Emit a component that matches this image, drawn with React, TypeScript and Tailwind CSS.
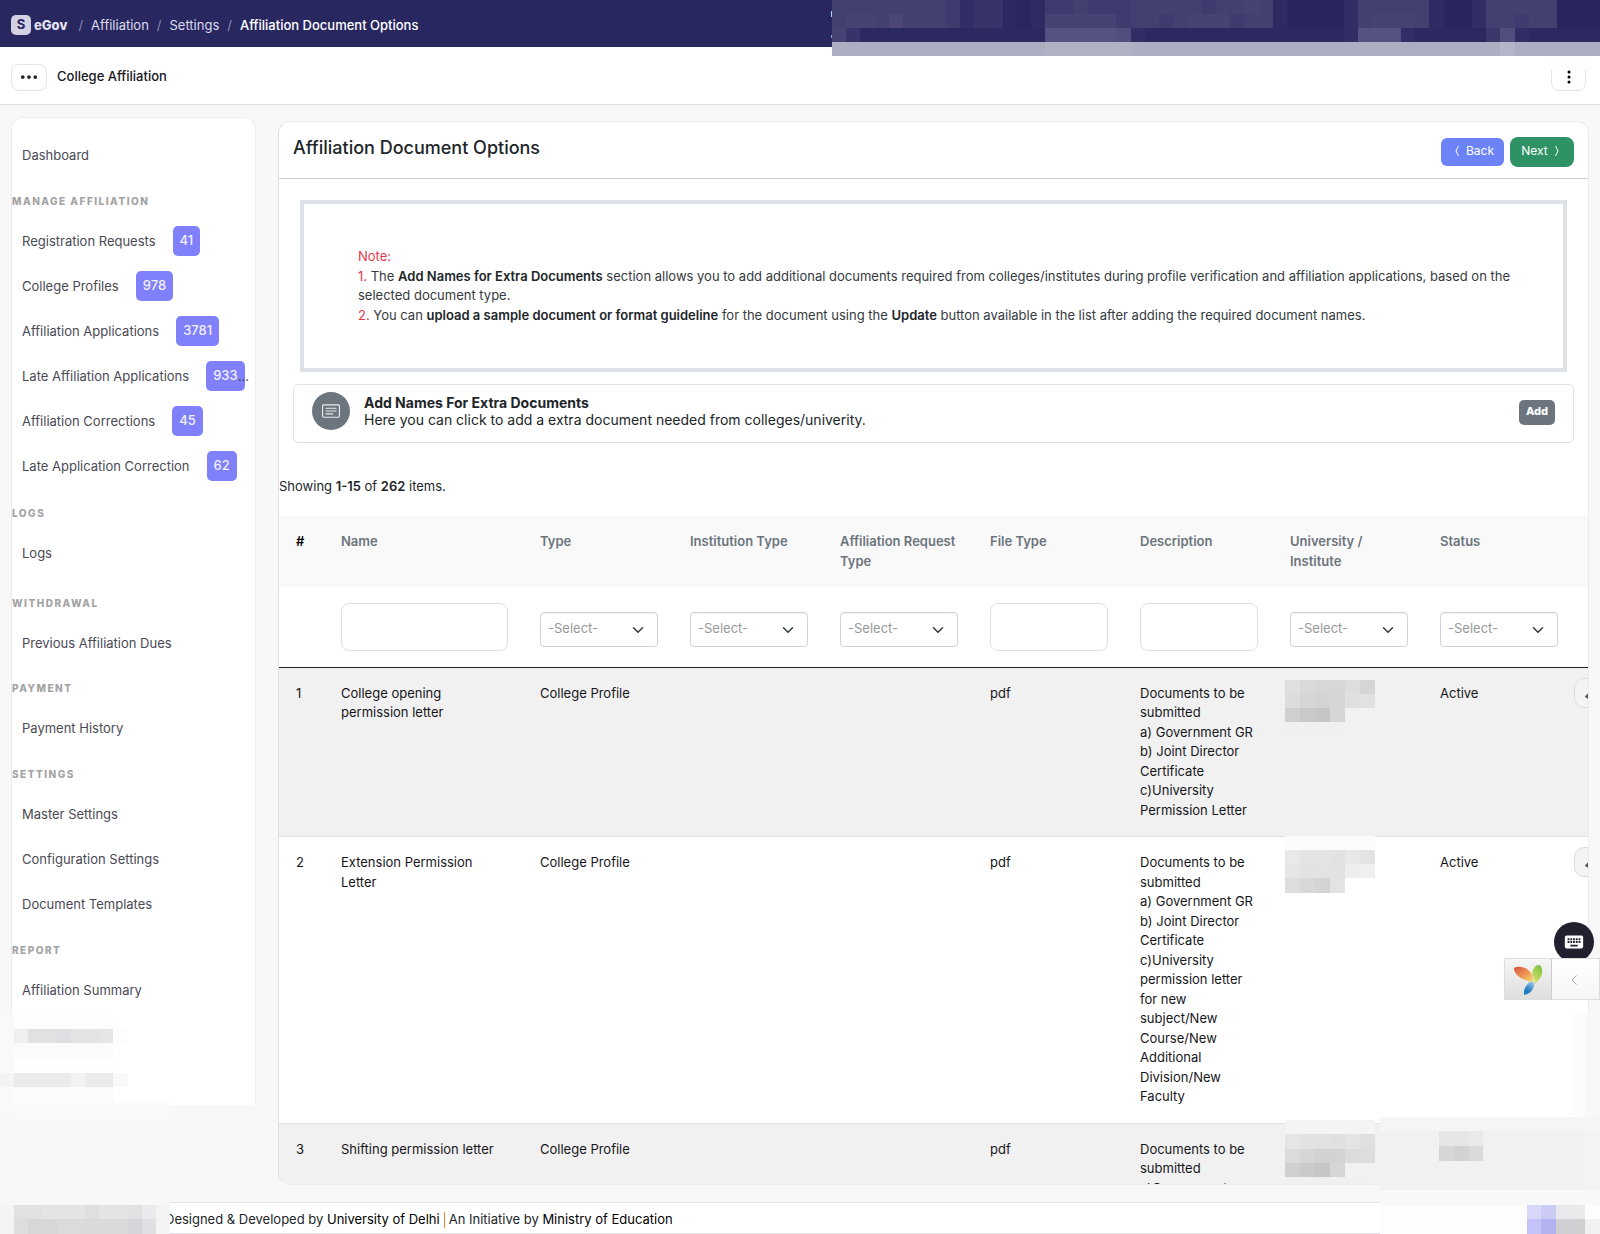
import React from "react";
import { BsCardText, BsThreeDots, BsThreeDotsVertical } from "react-icons/bs";
import { MdKeyboard } from "react-icons/md";

type NavItem = { label: string; count?: string; cut?: boolean };
type NavGroup = { title?: string; space?: string; items: NavItem[] };

const navGroups: NavGroup[] = [
  { items: [{ label: "Dashboard" }] },
  {
    title: "Manage Affiliation",
    space: "pb-0.5 pt-px",
    items: [
      { label: "Registration Requests", count: "41" },
      { label: "College Profiles", count: "978" },
      { label: "Affiliation Applications", count: "3781" },
      { label: "Late Affiliation Applications", count: "933", cut: true },
      { label: "Affiliation Corrections", count: "45" },
      { label: "Late Application Correction", count: "62" },
    ],
  },
  { title: "Logs", space: "pb-[5px]", items: [{ label: "Logs" }] },
  { title: "Withdrawal", items: [{ label: "Previous Affiliation Dues" }] },
  { title: "Payment", space: "pb-px", items: [{ label: "Payment History" }] },
  {
    title: "Settings",
    space: "pb-px",
    items: [
      { label: "Master Settings" },
      { label: "Configuration Settings" },
      { label: "Document Templates" },
    ],
  },
  { title: "Report", items: [{ label: "Affiliation Summary" }] },
];

const columns: { label: string; filter: "text" | "select" }[] = [
  { label: "Name", filter: "text" },
  { label: "Type", filter: "select" },
  { label: "Institution Type", filter: "select" },
  { label: "Affiliation Request Type", filter: "select" },
  { label: "File Type", filter: "text" },
  { label: "Description", filter: "text" },
  { label: "University / Institute", filter: "select" },
  { label: "Status", filter: "select" },
];

const rows = [
  {
    name: "College opening permission letter",
    type: "College Profile",
    fileType: "pdf",
    description: [
      "Documents to be submitted",
      "a) Government GR",
      "b) Joint Director Certificate",
      "c)University Permission Letter",
    ],
    status: "Active",
  },
  {
    name: "Extension Permission Letter",
    type: "College Profile",
    fileType: "pdf",
    description: [
      "Documents to be submitted",
      "a) Government GR",
      "b) Joint Director Certificate",
      "c)University permission letter for new subject/New Course/New Additional Division/New Faculty",
    ],
    status: "Active",
  },
  {
    name: "Shifting permission letter",
    type: "College Profile",
    fileType: "pdf",
    description: ["Documents to be submitted", "a)Government"],
    status: "",
  },
];

// [x, y, width, height, fill]
type Cell = [number, number, number, number, string];

function Mosaic({ width, height, cells, className }: { width: number; height: number; cells: Cell[]; className: string }) {
  return (
    <svg
      width={width}
      height={height}
      viewBox={`0 0 ${width} ${height}`}
      shapeRendering="crispEdges"
      aria-hidden="true"
      className={`pointer-events-none absolute ${className}`}
    >
      {cells.map(([x, y, w, h, fill], i) => (
        <rect key={i} x={x} y={y} width={w} height={h} fill={fill} />
      ))}
    </svg>
  );
}

// one letter per block
function grid(lines: string[], colors: Record<string, string>, w: number, h: number): Cell[] {
  const out: Cell[] = [];
  lines.forEach((line, r) => {
    line.split("").forEach((c, i) => {
      out.push([i * w, r * h, w, h, colors[c]]);
    });
  });
  return out;
}

const headerCells = grid(
  [
    "mmmmmmmmldkkcbellmlllmmmmmlmmnmebbbbfmmmmmebbfmmmmmbbb",
    "mnnmpmmmldkkcbennnnnlmmlmnnnlmmebbbbfmnnnmebbfmmlmmbbb",
    "nkcccccccccccccqqqqqodccccccccccccccdqqqdcccccgodccccc",
    "sssssssssssssssttttttssssssssssssssssssssssssssussssss",
  ],
  {
    b: "#28265c",
    c: "#2b2960",
    d: "#302e64",
    e: "#2d2b61",
    f: "#302e64",
    g: "#3a386b",
    k: "#363468",
    l: "#3e3c6e",
    m: "#424071",
    n: "#454373",
    o: "#504e7c",
    p: "#4b4675",
    q: "#545280",
    s: "#aeaec2",
    t: "#b1b1c4",
    u: "#b5b5c9",
  },
  768 / 54,
  14,
);

const grays = (list: string[], y: number, w = 15, h = 14): Cell[] =>
  list.map((c, i) => [i * w, y, w, h, `#${c}${c}${c}`] as Cell);

const universityCells: Cell[][] = [
  [
    ...grays(["df", "d9", "d7", "d7", "dd", "d5"], 0),
    ...grays(["dc", "d6", "d4", "d5", "e0", "e1"], 14),
    ...grays(["cf", "c9", "c6", "d6"], 28),
    [0, 42, 60, 14, "#f0f0f0"],
    [0, 142, 90, 14, "#f0f2f1"],
    [0, 156, 90, 14, "#fcfcfc"],
  ],
  [
    ...grays(["e9", "e4", "e4", "e2", "e8", "e3"], 0),
    ...grays(["e6", "e2", "e3", "e2", "ee", "f0"], 14),
    ...grays(["dd", "d8", "d4", "e3"], 28, 15, 15),
  ],
  [
    [0, 0, 90, 14, "#f4f4f4"],
    ...grays(["e5", "e2", "e2", "e0", "e4", "df"], 14, 15, 15),
    ...grays(["db", "d6", "d2", "d3", "dc", "dd"], 29),
    ...grays(["cf", "ca", "c6", "d6"], 43),
    [0, 57, 90, 10, "#f0f0f0"],
  ],
];
const universityPlace = ["top-3", "top-[13px]", "-top-1"];

const sidebarCells: Cell[] = [
  [0, 0, 14, 104, "#f9f9f9"],
  [14, 0, 99, 15, "#fdfdfd"],
  [14, 15, 14, 14, "#efeff0"],
  [28, 15, 29, 14, "#e0e1e3"],
  [57, 15, 14, 14, "#dedfe2"],
  [71, 15, 28, 14, "#e2e3e5"],
  [99, 15, 14, 14, "#e6e6e6"],
  [113, 15, 15, 14, "#fdfdfd"],
  [14, 29, 99, 15, "#fbfbfb"],
  [14, 44, 99, 15, "#fefefe"],
  [0, 59, 14, 14, "#f4f4f4"],
  [14, 59, 57, 14, "#ebebeb"],
  [71, 59, 14, 14, "#f2f2f2"],
  [85, 59, 28, 14, "#ebebeb"],
  [113, 59, 15, 14, "#f9f9f9"],
  [14, 73, 99, 16, "#fbfbfb"],
  [14, 89, 156, 15, "#fafafa"],
];

const footerLeftCells: Cell[] = [
  [0, 0, 170, 3, "#f8f8f8"],
  [0, 3, 170, 29, "#f4f4f4"],
  [14, 3, 28, 14, "#e0e2e1"],
  [42, 3, 43, 14, "#e3e4e5"],
  [85, 3, 14, 14, "#dfdfe0"],
  [99, 3, 29, 14, "#e4e4e5"],
  [128, 3, 14, 14, "#e0e1e3"],
  [142, 3, 14, 14, "#e9eaed"],
  [14, 17, 14, 15, "#dcdddd"],
  [28, 17, 29, 15, "#d6d8d7"],
  [57, 17, 28, 15, "#dadbdc"],
  [85, 17, 43, 15, "#d9dadc"],
  [128, 17, 14, 15, "#d4d5d9"],
  [142, 17, 14, 15, "#dfe0e4"],
];

const cornerCells: Cell[] = [
  [191, 0, 14, 103, "#fcfcfc"],
  [205, 0, 15, 103, "#f8f8f8"],
  [0, 103, 220, 14, "#f5f5f5"],
  [0, 117, 205, 59, "#f1f1f1"],
  [205, 117, 15, 59, "#f3f3f3"],
  [0, 176, 220, 15, "#f8f8f8"],
  [59, 117, 30, 15, "#e6e6e6"],
  [89, 117, 14, 15, "#e9e9e9"],
  [59, 132, 15, 15, "#d6d6d6"],
  [74, 132, 15, 15, "#d2d2d2"],
  [89, 132, 14, 15, "#dadada"],
  [0, 191, 220, 29, "#fdfdfd"],
  [147, 191, 14, 14, "#d8d7fb"],
  [161, 191, 15, 14, "#cccbf6"],
  [176, 191, 15, 14, "#e9e8ea"],
  [191, 191, 14, 14, "#eaeaeb"],
  [147, 205, 14, 15, "#c3c2f9"],
  [161, 205, 15, 15, "#b4b2ef"],
  [176, 205, 15, 15, "#d0cfd4"],
  [191, 205, 14, 15, "#d0d0d2"],
  [205, 205, 15, 15, "#f0f2f1"],
];

function Header() {
  return (
    <header className="relative flex h-[47px] shrink-0 items-center bg-[#28275f] px-[11px] pt-[3px] text-[13px] text-[#dddcf0]">
      <span className="flex size-5 items-center justify-center rounded-[5px] bg-[#d3d1e3] text-[13px] font-bold text-[#28275f]">S</span>
      <span className="ml-[3px] pt-0.5 text-[13px] font-extrabold text-[#e4e3f2]">eGov</span>
      <nav aria-label="Breadcrumb" className="ml-[11px] flex items-center gap-2 pt-0.5">
        <span className="text-[#8a89b4]">/</span>
        <a href="#affiliation">Affiliation</a>
        <span className="text-[#8a89b4]">/</span>
        <a href="#settings">Settings</a>
        <span className="text-[#8a89b4]">/</span>
        <span className="font-medium text-white">Affiliation Document Options</span>
      </nav>
      <Mosaic
        width={770}
        height={70}
        className="right-0 top-0 z-10"
        cells={[
          [1, 11, 1, 6, "#a9dcf5"],
          [1, 35, 1, 3, "#7fa9e6"],
          ...headerCells.map(([x, y, w, h, c]) => [x + 2, y, w, h, c] as Cell),
          [718, 56, 40, 14, "#fefefe"],
        ]}
      />
    </header>
  );
}

function SubHeader() {
  return (
    <div className="flex h-[58px] shrink-0 items-center border-b border-[#dee2e6] bg-white pl-[11px] pr-3.5 pt-[3px]">
      <button type="button" aria-label="Menu" className="flex h-[27px] w-9 items-center justify-center rounded-lg border border-[#e3e3e6]">
        <BsThreeDots size={20} className="text-[#212529]" />
      </button>
      <span className="ml-[10px] text-[13px] font-medium text-[#16161d]">College Affiliation</span>
      <button type="button" aria-label="More" className="ml-auto flex h-[27px] w-[35px] items-center justify-center rounded-lg border border-[#e3e3e6]">
        <BsThreeDotsVertical size={16} className="text-black" />
      </button>
    </div>
  );
}

function Sidebar() {
  return (
    <aside className="relative mt-3 h-[988px] w-[245px] shrink-0 rounded-t-xl border border-b-0 border-[#ececee] bg-white pt-3.5">
      {navGroups.map((group, g) => (
        <div key={g} className={group.space}>
          {group.title && (
            <h2 className="flex h-10 items-center pt-1.5 text-[10px] font-extrabold uppercase tracking-[1.5px] text-[#a3a3a3]">
              {group.title}
            </h2>
          )}
          <ul>
            {group.items.map((item) => (
              <li key={item.label} className="h-[45px]">
                <a href="#nav" className="flex h-full items-center whitespace-nowrap pl-[10px] pt-0.5 text-[13px] text-[#4a4a55]">
                  {item.label}
                  {item.count && (
                    <span className="mb-0.5 ml-[17px] flex h-[30px] items-center rounded-[5px] bg-[#8080fa] px-[7px] font-medium text-[#f0f0ff]">
                      {item.count}
                    </span>
                  )}
                  {item.cut && <span className="-ml-[7px]">…</span>}
                </a>
              </li>
            ))}
          </ul>
        </div>
      ))}
    </aside>
  );
}

function SelectFilter({ label }: { label: string }) {
  return (
    <div className="relative">
      <select
        aria-label={label}
        className="block h-[35px] w-full appearance-none rounded border border-[#ced4da] bg-white pl-[7px] text-[13px] text-[#999999] shadow-[inset_0_1px_1px_rgba(0,0,0,0.06)]"
      >
        <option>-Select-</option>
      </select>
      <svg viewBox="0 0 16 16" className="pointer-events-none absolute right-3.5 top-3 size-3" aria-hidden="true">
        <path d="m2 5 6 6 6-6" fill="none" stroke="#343a40" strokeWidth="2" strokeLinecap="round" strokeLinejoin="round" />
      </svg>
    </div>
  );
}

function DocumentsTable() {
  return (
    <div className="overflow-hidden">
      <table className="w-[1410px] table-fixed border-collapse text-left text-[13px] leading-normal text-[#16161a]">
        <colgroup>
          <col className="w-[46px]" />
          <col className="w-[199px]" />
          {columns.slice(1).map((c) => (
            <col key={c.label} className="w-[150px]" />
          ))}
          <col />
        </colgroup>
        <thead>
          <tr className="h-[71px] bg-[#f9f9f9] align-top text-[#6c757d]">
            <th className="py-4 pl-[17px] font-semibold text-black">#</th>
            {columns.map((c) => (
              <th key={c.label} className="py-4 pl-4 pr-3 font-semibold">{c.label}</th>
            ))}
            <th />
          </tr>
          <tr className="h-20 border-b border-[#212529] align-bottom">
            <td />
            {columns.map((c) => (
              <td key={c.label} className={c.filter === "text" ? "px-4 pb-4" : "px-4 pb-5"}>
                {c.filter === "text" ? (
                  <input type="text" aria-label={c.label} className="block h-12 w-full rounded-lg border border-[#e0e0e4] px-3" />
                ) : (
                  <SelectFilter label={c.label} />
                )}
              </td>
            ))}
            <td />
          </tr>
        </thead>
        <tbody>
          {rows.map((row, i) => (
            <tr key={row.name} className="border-b border-[#dee2e6] align-top odd:bg-[#f1f1f1]">
              <td className="py-4 pl-[17px]">{i + 1}</td>
              <td className="px-4 py-4">{row.name}</td>
              <td className="px-4 py-4">{row.type}</td>
              <td />
              <td />
              <td className="px-4 py-4">{row.fileType}</td>
              <td className="px-4 py-4">
                {row.description.map((line) => (
                  <div key={line}>{line}</div>
                ))}
              </td>
              <td className="relative">
                <Mosaic width={90} height={170} className={`left-[11px] z-10 ${universityPlace[i]}`} cells={universityCells[i]} />
              </td>
              <td className="px-4 py-4">{row.status}</td>
              <td className="pt-[10px]">
                <button type="button" aria-label="Update" className="flex h-[30px] w-10 items-center rounded-[10px] border border-[#dcdcdf] bg-[#f4f4f5] pl-[10px] pt-1">
                  <svg viewBox="0 0 12 12" className="size-3" aria-hidden="true">
                    <path d="M0 7.5 7 0l4 4-7.500 6L0 8z" fill="#55555c" />
                  </svg>
                </button>
              </td>
            </tr>
          ))}
        </tbody>
      </table>
    </div>
  );
}

function NoteBox() {
  return (
    <div className="mx-[21px] mt-[21px] border-4 border-[#dee2e6] py-[43px] pl-[54px] pr-12 text-[13px] leading-normal text-[#343a40]">
      <p className="text-[#e5384b]">Note:</p>
      <p>
        <span className="text-[#e5384b]">1.</span> The <b className="font-semibold text-[#212529]">Add Names for Extra Documents</b> section
        allows you to add additional documents required from colleges/institutes during profile verification and affiliation
        applications, based on the selected document type.
      </p>
      <p>
        <span className="text-[#e5384b]">2.</span> You can{" "}
        <b className="font-semibold text-[#212529]">upload a sample document or format guideline</b> for the document using the{" "}
        <b className="font-semibold text-[#212529]">Update</b> button available in the list after adding the required document names.
      </p>
    </div>
  );
}

function YiiLogo() {
  return (
    <svg viewBox="0 0 30 32" className="h-8 w-[30px]" aria-hidden="true">
      <defs>
        <linearGradient id="yiiRed" x1="0" y1="0" x2="1" y2="1">
          <stop offset="0" stopColor="#d9503a" />
          <stop offset="0.6" stopColor="#f0a05a" />
          <stop offset="1" stopColor="#fbe36a" />
        </linearGradient>
        <linearGradient id="yiiGreen" x1="0.7" y1="0" x2="0.2" y2="1">
          <stop offset="0" stopColor="#82bf45" />
          <stop offset="1" stopColor="#dbe56a" />
        </linearGradient>
        <linearGradient id="yiiBlue" x1="0.7" y1="0" x2="0.2" y2="1">
          <stop offset="0" stopColor="#9cc3e6" />
          <stop offset="0.7" stopColor="#1f7cc0" />
        </linearGradient>
      </defs>
      <path d="M1 5C4 3 10 3.200 14.500 6.500 18.500 9.500 20.500 14 20.700 19c-3-1-8-1-12-3.500C4 13 .8 9 1 5z" fill="url(#yiiRed)" />
      <path d="M19.300 12C19.300 6.500 21.500 2 26 2c2.500.5 3.500 4 3.200 7.500C28.700 14.500 25 18 22 21c0-3-.8-6.500-2.700-9z" fill="url(#yiiGreen)" />
      <path d="M17.500 18.500c1.300.4 2.600.8 3.800 1C22 25 17.500 31 11 31.800 10.500 26.500 12.500 22 17.500 18.500z" fill="url(#yiiBlue)" />
    </svg>
  );
}

function DebugBar() {
  return (
    <>
      <button
        type="button"
        aria-label="Keyboard"
        className="absolute bottom-[272px] right-1.5 z-20 flex size-10 items-center justify-center rounded-full bg-[#20202e] text-white"
      >
        <MdKeyboard size={22} />
      </button>
      <div className="absolute bottom-[234px] right-0 z-20 flex h-[42px] w-24 border border-[#dddddd]">
        <a href="#debug" aria-label="Debugger" className="flex w-[47px] items-center justify-center border-r border-[#cccccc] bg-linear-to-b from-[#f6f6f6] to-[#dedede]">
          <YiiLogo />
        </a>
        <button type="button" aria-label="Expand" className="flex flex-1 items-center justify-center bg-linear-to-b from-white to-[#f5f5f5] pr-1 pt-0.5">
          <svg viewBox="0 0 6 10" className="h-[10px] w-1.5" aria-hidden="true">
            <path d="M5.500.5 1 5l4.500 4.500" fill="none" stroke="#aaaaaa" />
          </svg>
        </button>
      </div>
    </>
  );
}

export default function App() {
  return (
    <div className="relative flex h-screen flex-col overflow-hidden bg-[#f8f8f8] font-['Inter',sans-serif]">
      <Header />
      <SubHeader />

      <main className="flex min-h-0 flex-1 gap-[22px] overflow-hidden pb-[17px] pl-[11px] pr-[11px]">
        <Sidebar />

        <section className="mt-4 min-w-0 flex-1 overflow-hidden rounded-xl border border-[#ececee] border-l-[#dee2e6] bg-white">
          <div className="flex h-[57px] items-center border-b border-[#cfcfd2] pl-3.5 pr-3.5 pt-0.5">
            <h1 className="pb-1.5 text-lg font-medium text-[#212529]">Affiliation Document Options</h1>
            <div className="ml-auto flex items-center gap-1.5 pt-0.5 text-xs text-white">
              <button type="button" className="flex h-7 w-[63px] items-center justify-center gap-[7px] rounded-md bg-[#6c83f7] pb-0.5 pl-1">
                <svg viewBox="0 0 4 12" className="h-3 w-1" aria-hidden="true">
                  <path d="M3.500 1 1 6l2.500 5" fill="none" stroke="currentColor" />
                </svg>
                Back
              </button>
              <button type="button" className="flex h-[30px] w-16 items-center justify-center gap-[7px] rounded-lg bg-[#2e9264] pb-0.5 pr-1">
                Next
                <svg viewBox="0 0 4 12" className="h-3 w-1" aria-hidden="true">
                  <path d="M.5 1 3 6 .5 11" fill="none" stroke="currentColor" />
                </svg>
              </button>
            </div>
          </div>

          <NoteBox />

          <div className="mx-3.5 mt-3 flex h-[59px] items-center rounded-[5px] border border-[#dee2e6] px-[18px]">
            <span className="mb-1.5 flex size-[38px] items-center justify-center rounded-full bg-[#6c757d] text-[#e9ecef]">
              <BsCardText size={18} />
            </span>
            <div className="mb-1.5 ml-3.5 text-sm leading-[17px] text-[#212529]">
              <h2 className="font-bold">Add Names For Extra Documents</h2>
              <p>Here you can click to add a extra document needed from colleges/univerity.</p>
            </div>
            <button type="button" className="mb-0.5 ml-auto flex h-[25px] w-9 justify-center rounded-[5px] bg-[#6c757d] pt-[3px] text-[11px] font-extrabold text-white">
              Add
            </button>
          </div>

          <p className="mb-5 mt-[33px] text-[13px] leading-5 text-[#212529]">
            Showing <b className="font-semibold">1-15</b> of <b className="font-semibold">262</b> items.
          </p>

          <DocumentsTable />
        </section>
      </main>

      <footer className="relative flex h-8 shrink-0 items-center border-y border-[#dee2e6] bg-white pl-[165px] pt-[3px] text-[13px] text-[#212529]">
        <span>
          Designed &amp; Developed by <a href="#du" className="text-black">University of Delhi</a>
        </span>
        <span className="mx-1 h-4 w-px bg-[#e0882a]" />
        <span>
          An Initiative by <a href="#moe" className="text-black">Ministry of Education</a>
        </span>
      </footer>

      <Mosaic width={170} height={104} className="bottom-[116px] left-0" cells={sidebarCells} />
      <Mosaic width={170} height={32} className="bottom-0 left-0" cells={footerLeftCells} />
      <Mosaic width={220} height={220} className="bottom-0 right-0" cells={cornerCells} />
      <DebugBar />
    </div>
  );
}
